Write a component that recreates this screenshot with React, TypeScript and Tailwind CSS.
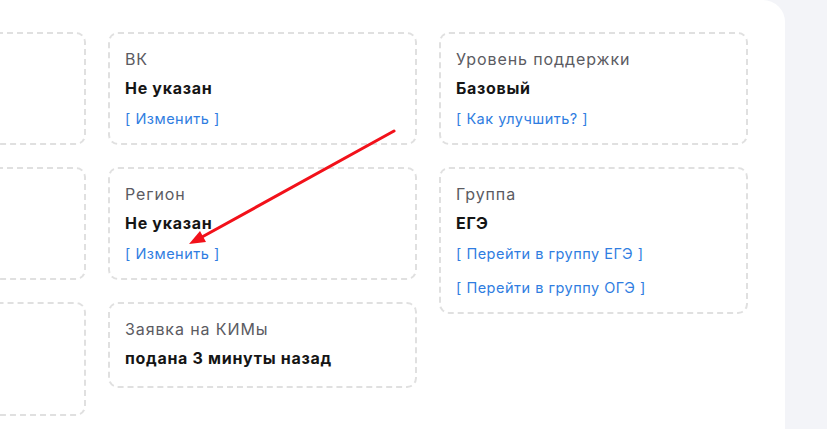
const font = { fontFamily: "Inter, 'Noto Sans', sans-serif" };

type Card = {
  label?: string;
  value?: string;
  links?: string[];
  h?: string;
};

const columns: Card[][] = [
  [{ h: "h-[113px]" }, { h: "h-[113px]" }, { h: "h-[114px]" }],
  [
    { label: "ВК", value: "Не указан", links: ["Изменить"] },
    { label: "Регион", value: "Не указан", links: ["Изменить"] },
    { label: "Заявка на КИМы", value: "подана 3 минуты назад" },
  ],
  [
    { label: "Уровень поддержки", value: "Базовый", links: ["Как улучшить?"] },
    { label: "Группа", value: "ЕГЭ", links: ["Перейти в группу ЕГЭ", "Перейти в группу ОГЭ"] },
  ],
];

function InfoCard({ card }: { card: Card }) {
  return (
    <div
      className={`rounded-[10px] border-2 border-dashed border-[#e0e0e0] bg-white px-[15px] pt-[13px] ${
        card.links ? "pb-[14px]" : "pb-[16px]"
      } ${card.h ?? ""}`}
    >
      {card.label && (
        <div className="text-[16px] leading-[24px] tracking-[0.9px] text-[#5b5b62]">{card.label}</div>
      )}
      {card.value && (
        <div className="mt-[5px] text-[16px] font-bold leading-[24px] tracking-[0.7px] text-[#151515]">
          {card.value}
        </div>
      )}
      {card.links && (
        <div className="mt-[9px] flex flex-col gap-[14px]">
          {card.links.map((l) => (
            <a key={l} className="text-[14.5px] leading-[20px] tracking-[0.5px] text-[#2f7de1]">
              [ {l} ]
            </a>
          ))}
        </div>
      )}
    </div>
  );
}

export default function App() {
  return (
    <div className="relative h-[429px] w-[827px] overflow-hidden bg-[#f3f4f8]" style={font}>
      <div className="h-full w-[785px] overflow-hidden rounded-tr-[22px] bg-white">
        <div className="ml-[-223px] flex items-start gap-[22px] pt-[32px]">
          {columns.map((col, i) => (
            <div key={i} className="flex w-[309px] shrink-0 flex-col gap-[22px]">
              {col.map((c, j) => (
                <InfoCard key={j} card={c} />
              ))}
            </div>
          ))}
        </div>
      </div>

      {/* annotation arrow */}
      <svg className="pointer-events-none absolute left-0 top-0" width="827" height="429">
        <line x1="394" y1="131" x2="202" y2="237" stroke="#f2111a" strokeWidth="3" strokeLinecap="round" />
        <polygon points="189,244 200,231 206,242" fill="#f2111a" />
      </svg>
    </div>
  );
}
